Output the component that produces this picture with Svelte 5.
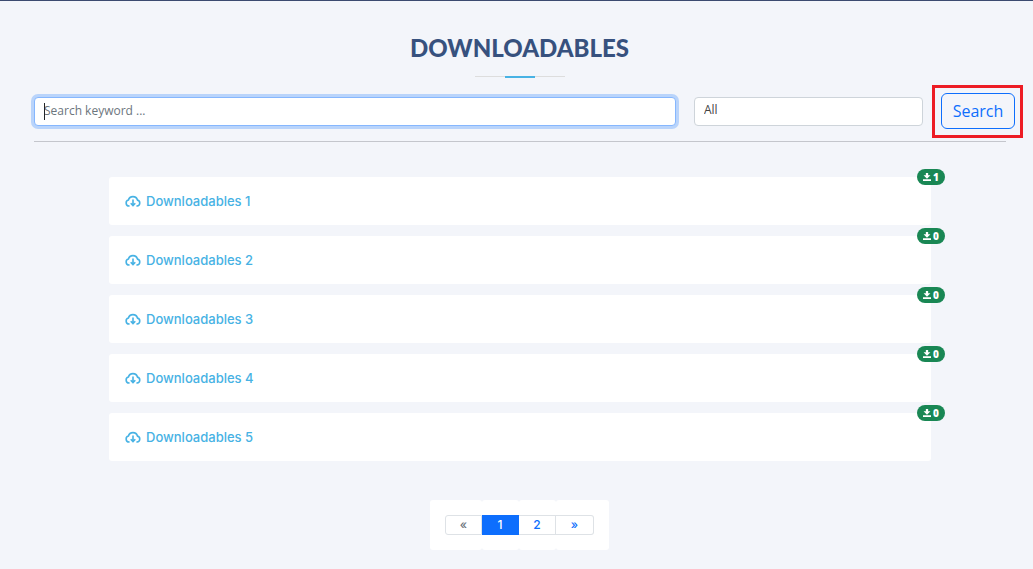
<script>
  let keyword = $state('');
  let category = $state('all');
  let page = $state(1);

  const files = [
    { name: 'Downloadables 1', count: 1 },
    { name: 'Downloadables 2', count: 0 },
    { name: 'Downloadables 3', count: 0 },
    { name: 'Downloadables 4', count: 0 },
    { name: 'Downloadables 5', count: 0 }
  ];
</script>

<main>
  <h2>DOWNLOADABLES</h2>

  <form onsubmit={(e) => e.preventDefault()}>
    <div class="keyword" class:empty={!keyword}>
      <input type="text" aria-label="Search keyword" placeholder="Search keyword ..." bind:value={keyword} />
    </div>
    <select aria-label="Category" bind:value={category}>
      <option value="all">All</option>
    </select>
    <button class="search" type="submit">Search</button>
  </form>
  <hr />

  <ul class="files">
    {#each files as file}
      <li>
        <a href="#download">
          <svg class="cloud" viewBox="0 0 16 14" aria-hidden="true">
            <path d="M4.6 12H4a3 3 0 0 1-.6-5.9A4.7 4.7 0 0 1 12.5 6.100a3 3 0 0 1-.5 5.900h-.6M8 5.500v6M5.700 9.300 8 11.600l2.300-2.300" />
          </svg>
          {file.name}
        </a>
        <span class="badge">
          <svg viewBox="0 0 14 14" aria-hidden="true">
            <path d="M5 0h4v4h4L7 10 1 4h4zM0 11h14v3H0z" />
          </svg>
          {file.count}
        </span>
      </li>
    {/each}
  </ul>

  <nav aria-label="Pages">
    <ul class="pages">
      <li><button type="button" aria-label="Previous" class="muted" onclick={() => (page = 1)}>«</button></li>
      {#each [1, 2] as n}
        <li><button type="button" class:active={page === n} onclick={() => (page = n)}>{n}</button></li>
      {/each}
      <li><button type="button" aria-label="Next" onclick={() => (page = 2)}>»</button></li>
    </ul>
  </nav>
</main>

<style>
  :global(body) {
    margin: 0;
    background: #f3f5fa;
  }
  * {
    box-sizing: border-box;
  }
  main {
    border-top: 1px solid #3b4a70;
    padding: 32px 0 19px;
    font-family: 'Open Sans', sans-serif;
    color: #444;
  }
  h2 {
    position: relative;
    margin: 0 0 15px 6px;
    padding-bottom: 16px;
    font: 900 24px/29px Lato, sans-serif;
    text-align: center;
    color: #37517e;
  }
  h2::before,
  h2::after {
    content: '';
    position: absolute;
    bottom: 0;
    left: 50%;
    height: 1px;
    width: 90px;
    margin-left: -45px;
    background: #ddd;
  }
  h2::before {
    bottom: 1px;
  }
  h2::after {
    height: 2px;
    width: 30px;
    margin-left: -15px;
    background: #47b2e4;
  }
  form {
    display: grid;
    grid-template-columns: 642fr 229fr 74px;
    gap: 18px;
    align-items: center;
    padding: 0 18px 0 34px;
  }
  .keyword {
    position: relative;
    display: flex;
  }
  .keyword.empty::after {
    content: '';
    position: absolute;
    left: 10px;
    top: 6px;
    width: 1px;
    height: 17px;
    background: #212529;
  }
  input,
  select {
    width: 100%;
    height: 29px;
    margin: 0;
    padding: 0 9px 2px;
    border: 1px solid #ced4da;
    border-radius: 4px;
    background: #fff;
    font: 12px/18px 'Open Sans', sans-serif;
    color: #444;
    appearance: none;
    outline: none;
  }
  input {
    border-color: #86b7fe;
    box-shadow: 0 0 0 3px #b9d4fb;
  }
  input::placeholder {
    color: #6c757d;
    opacity: 1;
  }
  .search {
    position: relative;
    height: 36px;
    padding: 0;
    border: 1px solid #0d6efd;
    border-radius: 6px;
    background: transparent;
    font: 16px/24px 'Open Sans', sans-serif;
    color: #0d6efd;
  }
  /* square frame around the rounded button */
  .search::after {
    content: '';
    position: absolute;
    inset: -9px -9px -10px -10px;
    border: 3px solid #ed1c24;
  }
  hr {
    margin: 12px 27px 0 34px;
    border: 0;
    height: 1px;
    background: #c4c6cc;
  }
  ul {
    list-style: none;
    margin: 0;
    padding: 0;
  }
  .files {
    display: grid;
    gap: 11px;
    margin: 35px 102px 0 109px;
  }
  .files li {
    position: relative;
    background: #fff;
    border-radius: 3px;
  }
  .files a {
    display: flex;
    align-items: center;
    gap: 5px;
    height: 48px;
    padding-left: 16px;
    font: 500 13px/20px Inter, sans-serif;
    color: #47b2e4;
    text-decoration: none;
  }
  .cloud {
    width: 16px;
    height: 14px;
    fill: none;
    stroke: currentColor;
    stroke-width: 1.6;
  }
  .badge {
    position: absolute;
    top: -8px;
    right: -14px;
    display: flex;
    align-items: center;
    justify-content: center;
    gap: 2px;
    width: 28px;
    height: 16px;
    border-radius: 8px;
    background: #198754;
    color: #fff;
    font: 800 10px/16px 'Open Sans', sans-serif;
  }
  .badge svg {
    width: 8px;
    height: 8px;
    fill: currentColor;
  }
  nav {
    display: flex;
    justify-content: center;
    margin: 39px 0 0 6px;
  }
  .pages {
    display: flex;
  }
  .pages li {
    padding: 15px 0;
    border-radius: 3px;
    background: #fff;
  }
  .pages li:first-child {
    padding-left: 15px;
  }
  .pages li:last-child {
    padding-right: 15px;
  }
  .pages button {
    display: block;
    width: 37px;
    height: 20px;
    padding: 0;
    border: 1px solid #dee2e6;
    border-left: 0;
    background: #fff;
    color: #0d6efd;
    font: 500 12px/18px Inter, sans-serif;
  }
  .pages li:first-child button {
    border-left: 1px solid #dee2e6;
    border-radius: 3px 0 0 3px;
  }
  .pages li:last-child button {
    width: 38px;
    border-radius: 0 3px 3px 0;
  }
  .pages button.muted {
    color: #6c757d;
  }
  .pages button.active {
    background: #0d6efd;
    border-color: #0d6efd;
    color: #fff;
  }
</style>
